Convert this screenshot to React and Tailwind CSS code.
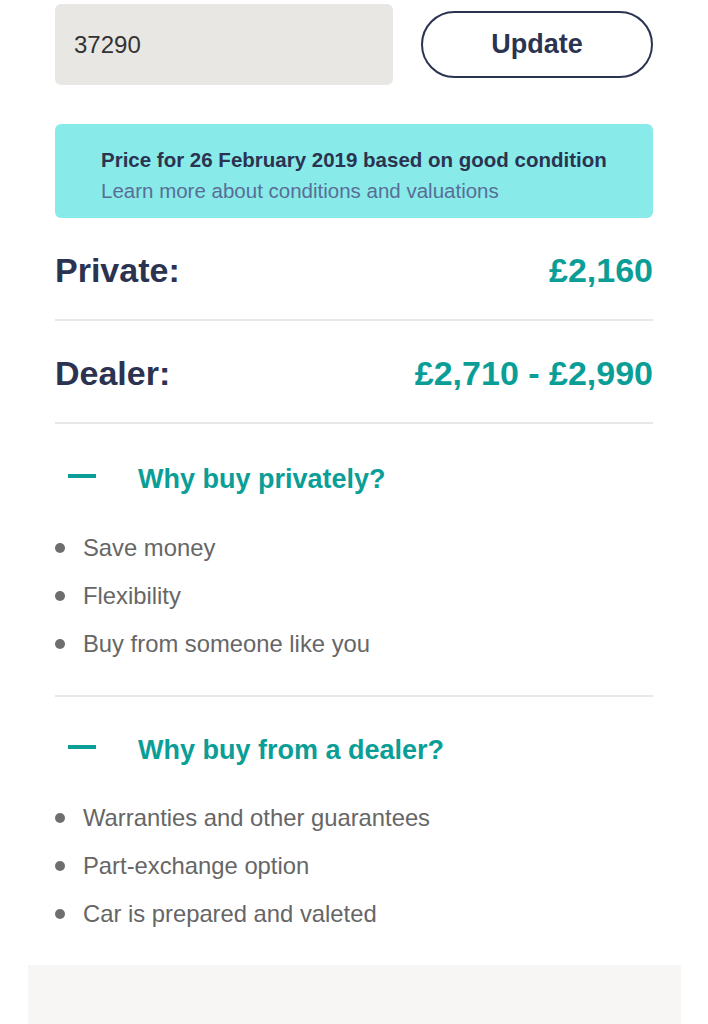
export default function App() {
  const sections = [
    {
      title: "Why buy privately?",
      items: ["Save money", "Flexibility", "Buy from someone like you"],
    },
    {
      title: "Why buy from a dealer?",
      items: ["Warranties and other guarantees", "Part-exchange option", "Car is prepared and valeted"],
    },
  ];

  return (
    <div className="w-full min-h-[1024px] bg-white font-['Liberation_Sans',Arial,sans-serif]">
      <div className="px-[55px] pt-[4px]">
        {/* Mileage + update */}
        <div className="flex items-center justify-between">
          <div className="w-[338px] h-[81px] rounded-[6px] bg-[#e8e7e4] flex items-center pl-[19px] text-[24px] text-[#333333]">
            37290
          </div>
          <button className="w-[232px] h-[67px] rounded-full border-2 border-[#2b3350] bg-white text-[27px] font-bold text-[#2b3350]">
            Update
          </button>
        </div>

        {/* Valuation banner */}
        <div className="mt-[39px] h-[94px] rounded-[6px] bg-[#88ebe9] pl-[46px] pt-[20px]">
          <p className="text-[20.5px] leading-[31px] font-bold text-[#2b3350]">
            Price for 26 February 2019 based on good condition
          </p>
          <p className="text-[20.5px] leading-[31px] text-[#5a6d96]">
            Learn more about conditions and valuations
          </p>
        </div>

        {/* Prices */}
        <div className="flex items-start justify-between h-[103px] pt-[35px] border-b-2 border-[#e8e8e8] text-[34px] leading-none font-bold">
          <span className="text-[#2b3350]">Private:</span>
          <span className="text-[#0a9e96]">£2,160</span>
        </div>
        <div className="flex items-start justify-between h-[103px] pt-[35px] border-b-2 border-[#e8e8e8] text-[34px] leading-none font-bold">
          <span className="text-[#2b3350]">Dealer:</span>
          <span className="text-[#0a9e96]">£2,710 - £2,990</span>
        </div>

        {/* Reasons */}
        {sections.map((section, i) => (
          <div
            key={section.title}
            className={
              i === 0
                ? "pt-[42px] pb-[27px] border-b-2 border-[#e8e8e8]"
                : "pt-[40px] pb-[27px]"
            }
          >
            <div className="flex items-center">
              <span className="ml-[13px] mb-[8px] w-[28px] h-[4px] bg-[#0a9e96]" />
              <h2 className="ml-[42px] text-[27px] leading-none font-bold text-[#0a9e96]">
                {section.title}
              </h2>
            </div>
            <ul className={i === 0 ? "mt-[31px]" : "mt-[30px]"}>
              {section.items.map((item) => (
                <li key={item} className="flex items-center h-[48px]">
                  <span className="w-[10px] h-[10px] rounded-full bg-[#6e6e6e]" />
                  <span className="ml-[18px] text-[23.8px] text-[#666666]">{item}</span>
                </li>
              ))}
            </ul>
          </div>
        ))}
      </div>

      {/* Next panel */}
      <div className="mx-[28px] w-[653px] h-[59px] bg-[#f7f6f4]" />
    </div>
  );
}
